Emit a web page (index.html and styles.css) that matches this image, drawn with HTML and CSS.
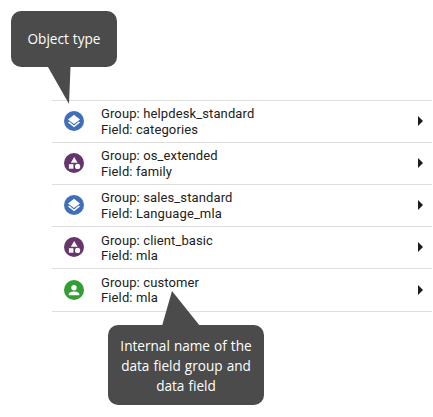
FILE: index.html
```html
<!DOCTYPE html>
<html lang="en">
<head>
    <meta charset="UTF-8">
    <meta name="viewport" content="width=device-width, initial-scale=1.0">
    <title>Data fields</title>
    <link rel="stylesheet" href="styles.css">
</head>
<body>
    <!-- shared icons -->
    <svg class="sprite">
        <symbol id="icon-layers" viewBox="0 0 20 20">
            <path d="M10 3.7 L16 8.4 L10 13.1 L4 8.4 Z"/>
            <path d="M4 11.5 L5.2 10.6 L10 14.4 L14.8 10.6 L16 11.5 L10 16.2 Z"/>
        </symbol>
        <symbol id="icon-shapes" viewBox="0 0 20 20">
            <path d="M10.2 4.1 L13.6 9.7 H6.8 Z"/>
            <rect x="4.9" y="11.2" width="4.5" height="4.5"/>
            <circle cx="13.6" cy="13.4" r="2.6"/>
        </symbol>
        <symbol id="icon-person" viewBox="0 0 20 20">
            <circle cx="10" cy="7.7" r="2.7"/>
            <path d="M4.7 15.3 V14.2 C4.7 12.3 8.2 11.5 10 11.5 S15.3 12.3 15.3 14.2 V15.3 Z"/>
        </symbol>
    </svg>

    <div class="page">
        <ul class="field-list">
            <li class="field">
                <span class="badge blue"><svg><use href="#icon-layers"/></svg></span>
                <div class="label">Group: helpdesk_standard<br>Field: categories</div>
                <span class="arrow"></span>
            </li>
            <li class="field">
                <span class="badge purple"><svg><use href="#icon-shapes"/></svg></span>
                <div class="label">Group: os_extended<br>Field: family</div>
                <span class="arrow"></span>
            </li>
            <li class="field">
                <span class="badge blue"><svg><use href="#icon-layers"/></svg></span>
                <div class="label">Group: sales_standard<br>Field: Language_mla</div>
                <span class="arrow"></span>
            </li>
            <li class="field">
                <span class="badge purple"><svg><use href="#icon-shapes"/></svg></span>
                <div class="label tight">Group: client_basic<br>Field: mla</div>
                <span class="arrow"></span>
            </li>
            <li class="field last">
                <span class="badge green"><svg><use href="#icon-person"/></svg></span>
                <div class="label tight">Group: customer<br>Field: mla</div>
                <span class="arrow"></span>
            </li>
        </ul>

        <div class="callout callout-type">
            Object type
            <svg class="tail" viewBox="0 0 23 37"><path d="M0 0 H22.5 L21 37 Z"/></svg>
        </div>
        <div class="callout callout-name">
            Internal name of the<br>data field group and<br>data field
            <svg class="tail" viewBox="0 0 38 35"><path d="M0 35 L10 0 L38 35 Z"/></svg>
        </div>
    </div>
</body>
</html>
```
FILE: styles.css
```css
body {
    margin: 0;
    background: #fff;
    font-family: Roboto, "Liberation Sans", sans-serif;
}

.sprite {
    display: none;
}

.page {
    position: relative;
    box-sizing: border-box;
    width: 433px;
    height: 417px;
    padding: 100px 1px 0 52px;
    overflow: hidden;
}

.field-list {
    list-style: none;
    margin: 0;
    padding: 0;
    border-top: 1px solid #dedede;
}

.field {
    display: flex;
    align-items: center;
    box-sizing: border-box;
    height: 42px;
    padding: 0 9px 0 12px;
    border-bottom: 1px solid #dedede;
}

.field.last {
    height: 43px;
}

.badge {
    width: 20px;
    height: 20px;
    margin-right: 17px;
    margin-bottom: 1px;
    border-radius: 50%;
}

.badge svg {
    display: block;
    width: 20px;
    height: 20px;
    fill: #fff;
}

.blue { background: #3f6fb8; }
.purple { background: #65356b; }
.green { background: #339e35; }

.label {
    flex: 1;
    font-size: 13px;
    line-height: 16px;
    letter-spacing: 0.12px;
    color: #212121;
}

.label.tight {
    line-height: 15px;
    padding-top: 1px;
}

.arrow {
    margin-bottom: 1px;
    border-left: 5px solid #1c1c1c;
    border-top: 5px solid transparent;
    border-bottom: 5px solid transparent;
}

.last .badge,
.last .arrow {
    margin-bottom: 0;
}

.last .label {
    padding-top: 0;
}

/* callouts lie over the list */
.callout {
    position: absolute;
    display: flex;
    align-items: center;
    justify-content: center;
    border-radius: 10px;
    background: #4b4b4b;
    color: #fff;
    font-family: "Open Sans", "Noto Sans", sans-serif;
    font-size: 13.6px;
    font-weight: 400;
    line-height: 20px;
    word-spacing: 0.5px;
    text-align: center;
}

.callout-type {
    left: 11px;
    top: 11px;
    width: 106px;
    height: 56px;
}

.callout-name {
    left: 108px;
    top: 325px;
    width: 156px;
    height: 80px;
    display: block;
    box-sizing: border-box;
    padding-top: 11px;
}

.tail {
    position: absolute;
    fill: #4b4b4b;
}

.callout-type .tail {
    left: 37px;
    top: 56px;
    width: 23px;
    height: 37px;
}

.callout-name .tail {
    left: 54px;
    top: -34px;
    width: 38px;
    height: 35px;
}
```
